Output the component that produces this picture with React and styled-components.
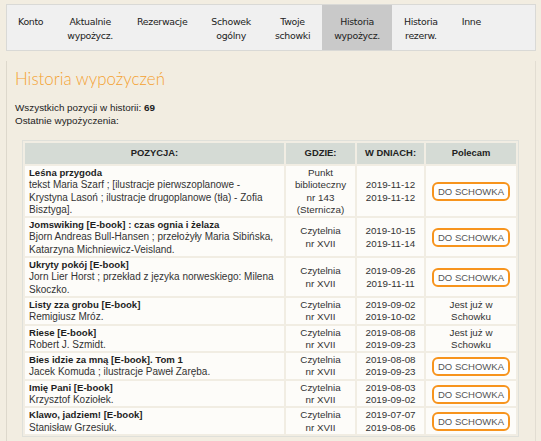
import React from "react";
import styled, { createGlobalStyle } from "styled-components";

const Global = createGlobalStyle`
  html, body { margin: 0; padding: 0; }
  body {
    background: #f2ede1;
    font-family: "Liberation Sans", Arial, sans-serif;
    color: #333;
    width: 541px;
    height: 441px;
    overflow: hidden;
  }
`;

const Page = styled.div`
  padding: 4px 5px 0 6px;
`;

const Nav = styled.nav`
  display: flex;
  height: 47px;
  background: #f0f0f0;
  border: 1px solid #d9d9d6;
  box-sizing: border-box;
`;

const NavItem = styled.div`
  padding: 10px 12px 0;
  text-align: center;
  font-family: "DejaVu Sans", Tahoma, sans-serif;
  font-size: 9.4px;
  line-height: 14px;
  letter-spacing: -0.3px;
  color: #222;
  background: ${(p) => (p.$active ? "#c9c9c9" : "transparent")};
  &:first-child { padding-left: 11px; }
`;

const Panel = styled.main`
  margin-top: 10px;
  border-left: 1px solid #ddd8cc;
  border-right: 1px solid #e2ddd2;
  padding: 5px 0 0 8px;
  min-height: 400px;
`;

const Title = styled.h1`
  margin: 2px 0 0;
  font-family: "Lato", "Open Sans", sans-serif;
  font-weight: 300;
  font-size: 16.9px;
  color: #f4a232;
`;

const Summary = styled.p`
  margin: 12px 0 0;
  font-size: 9.9px;
  line-height: 13px;
  color: #222;
  b { font-weight: bold; }
`;

const TableWrap = styled.div`
  margin: 13px 16px 0 7px;
  background: #dfe0da;
  padding: 3px;
`;

const Table = styled.table`
  width: calc(100% + 4px);
  table-layout: fixed;
  border-collapse: separate;
  border-spacing: 2px;
  margin: -2px;
  background: #f1ede3;
  line-height: 12.3px;
`;

const Th = styled.th`
  box-sizing: border-box;
  background: #d5dbd5;
  color: #222;
  font-weight: bold;
  font-size: 9.4px;
  height: 21px;
  padding: 0 2px;
  text-align: center;
  width: ${(p) => p.$w || "auto"};
`;

const Td = styled.td`
  box-sizing: border-box;
  background: #fdfcf9;
  padding: 1px 4px 0 4px;
  vertical-align: middle;
  text-align: ${(p) => (p.$left ? "left" : "center")};
  font-size: ${(p) => (p.$left ? "10px" : "9.8px")};
  color: #333;
`;

const BookTitle = styled.div`
  font-weight: bold;
  font-size: 9.6px;
  color: #1e1e1e;
`;

const Btn = styled.button`
  display: block;
  margin: 0 auto;
  width: 78px;
  height: 19px;
  border: 2px solid #f7941d;
  border-radius: 6px;
  background: #fff;
  color: #555;
  font-family: "Liberation Sans", Arial, sans-serif;
  font-size: 9.5px;
  padding: 0 0 0 4px;
  text-align: left;
  white-space: nowrap;
`;

const rows = [
  {
    t: "Leśna przygoda",
    a: "tekst Maria Szarf ; [ilustracje pierwszoplanowe - Krystyna Lasoń ; ilustracje drugoplanowe (tła) - Zofia Bisztyga].",
    w: ["Punkt", "biblioteczny", "nr 143", "(Sternicza)"],
    d: ["2019-11-12", "2019-11-12"],
    btn: true,
  },
  {
    t: "Jomswiking [E-book] : czas ognia i żelaza",
    a: "Bjorn Andreas Bull-Hansen ; przełożyły Maria Sibińska, Katarzyna Michniewicz-Veisland.",
    w: ["Czytelnia", "nr XVII"],
    d: ["2019-10-15", "2019-11-14"],
    btn: true,
  },
  {
    t: "Ukryty pokój [E-book]",
    a: "Jorn Lier Horst ; przekład z języka norweskiego: Milena Skoczko.",
    w: ["Czytelnia", "nr XVII"],
    d: ["2019-09-26", "2019-11-11"],
    btn: true,
  },
  {
    t: "Listy zza grobu [E-book]",
    a: "Remigiusz Mróz.",
    w: ["Czytelnia", "nr XVII"],
    d: ["2019-09-02", "2019-10-02"],
    btn: false,
  },
  {
    t: "Riese [E-book]",
    a: "Robert J. Szmidt.",
    w: ["Czytelnia", "nr XVII"],
    d: ["2019-08-08", "2019-09-23"],
    btn: false,
  },
  {
    t: "Bies idzie za mną [E-book]. Tom 1",
    a: "Jacek Komuda ; ilustracje Paweł Zaręba.",
    w: ["Czytelnia", "nr XVII"],
    d: ["2019-08-08", "2019-09-23"],
    btn: true,
  },
  {
    t: "Imię Pani [E-book]",
    a: "Krzysztof Koziołek.",
    w: ["Czytelnia", "nr XVII"],
    d: ["2019-08-03", "2019-09-02"],
    btn: true,
  },
  {
    t: "Klawo, jadziem! [E-book]",
    a: "Stanisław Grzesiuk.",
    w: ["Czytelnia", "nr XVII"],
    d: ["2019-07-07", "2019-08-06"],
    btn: true,
  },
];

const navItems = [
  ["Konto"],
  ["Aktualnie", "wypożycz."],
  ["Rezerwacje"],
  ["Schowek", "ogólny"],
  ["Twoje", "schowki"],
  ["Historia", "wypożycz."],
  ["Historia", "rezerw."],
  ["Inne"],
];

const Lines = ({ items }) =>
  items.map((l, i) => (
    <React.Fragment key={i}>
      {i > 0 && <br />}
      {l}
    </React.Fragment>
  ));

export default function App() {
  return (
    <>
      <Global />
      <Page>
        <Nav>
          {navItems.map((n, i) => (
            <NavItem key={i} $active={i === 5}>
              <Lines items={n} />
            </NavItem>
          ))}
        </Nav>
        <Panel>
          <Title>Historia wypożyczeń</Title>
          <Summary>
            Wszystkich pozycji w historii: <b>69</b>
            <br />
            Ostatnie wypożyczenia:
          </Summary>
          <TableWrap>
            <Table>
              <thead>
                <tr>
                  <Th>POZYCJA:</Th>
                  <Th $w="69px">GDZIE:</Th>
                  <Th $w="67px">W DNIACH:</Th>
                  <Th $w="90px">Polecam</Th>
                </tr>
              </thead>
              <tbody>
                {rows.map((r, i) => (
                  <tr key={i}>
                    <Td $left>
                      <BookTitle>{r.t}</BookTitle>
                      {r.a}
                    </Td>
                    <Td>
                      <Lines items={r.w} />
                    </Td>
                    <Td>
                      <Lines items={r.d} />
                    </Td>
                    <Td>
                      {r.btn ? (
                        <Btn>DO SCHOWKA</Btn>
                      ) : (
                        <Lines items={["Jest już w", "Schowku"]} />
                      )}
                    </Td>
                  </tr>
                ))}
              </tbody>
            </Table>
          </TableWrap>
        </Panel>
      </Page>
    </>
  );
}
